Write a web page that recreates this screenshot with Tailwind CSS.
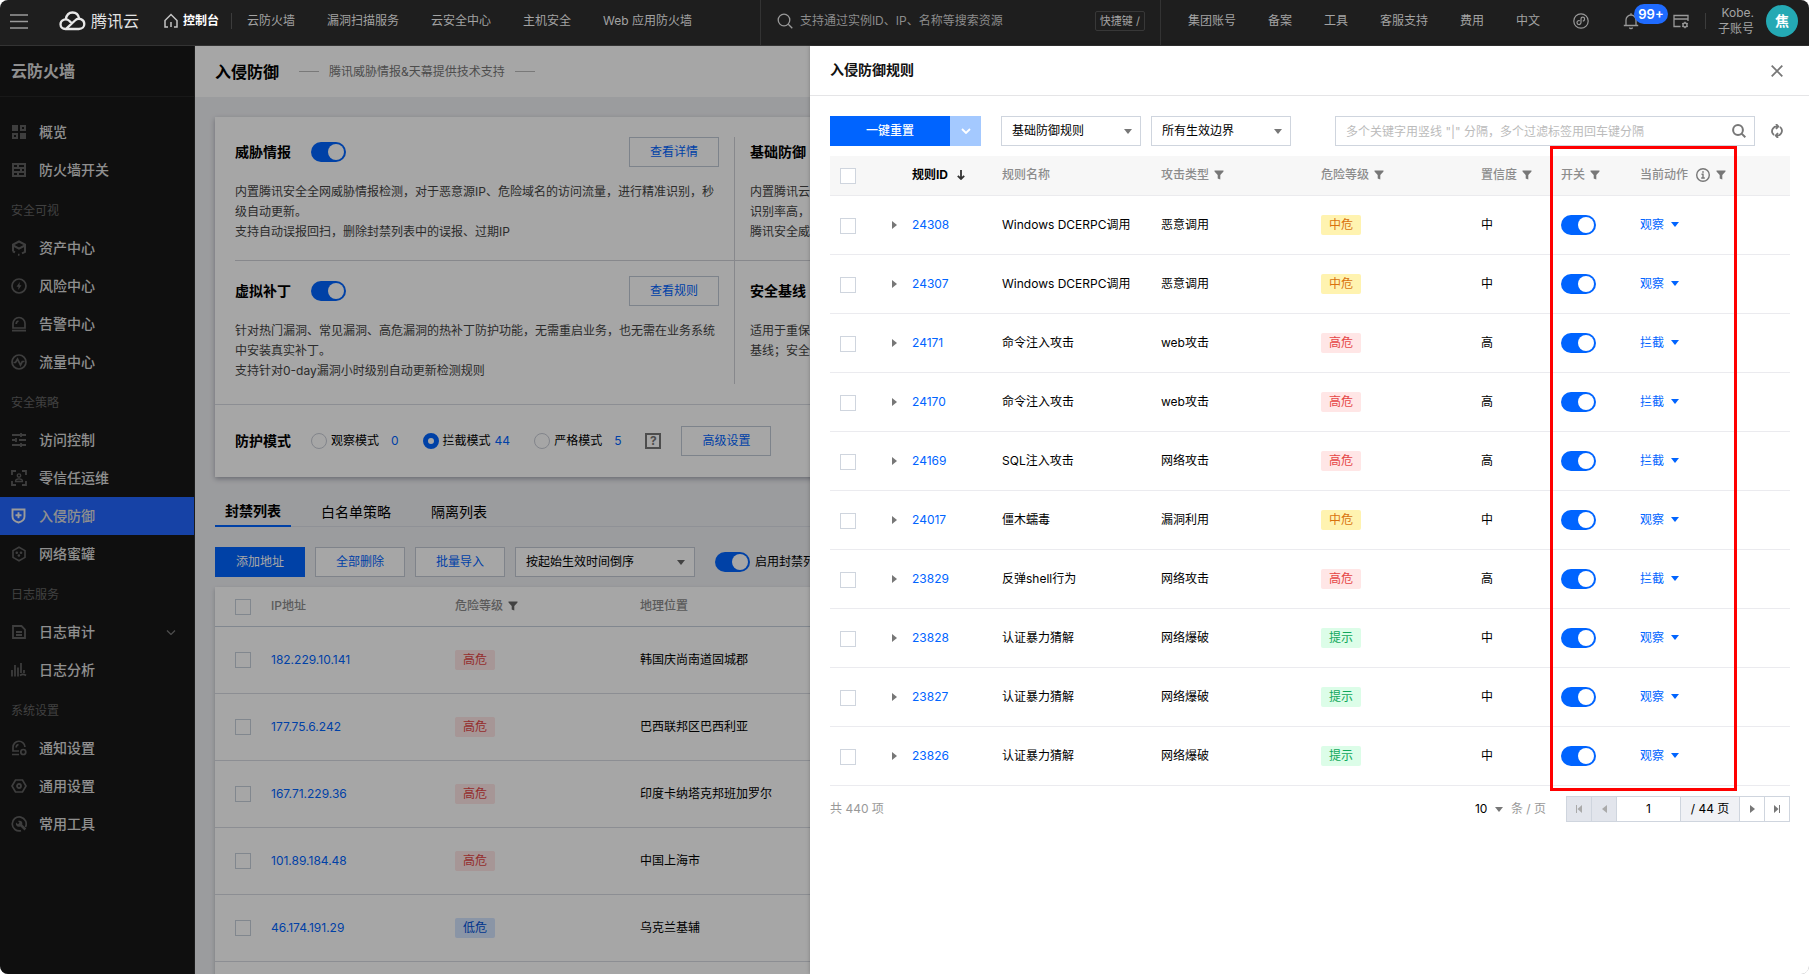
<!DOCTYPE html>
<html lang="zh-CN">
<head>
<meta charset="utf-8">
<meta name="viewport" content="width=device-width, initial-scale=1">
<title>云防火墙 - 入侵防御</title>
<script src="https://cdn.jsdelivr.net/npm/@tailwindcss/browser@4"></script>
</head>
<body class="bg-white font-['Inter','Noto_Sans_CJK_SC',sans-serif] text-xs leading-5 text-black">

<!-- Shared icon sprite -->
<svg class="hidden" aria-hidden="true">
  <symbol id="i-filter" viewBox="0 0 10 10"><path d="M.5.5h9v1L6.300 5v4.500L3.700 8.500V5L.5 1.500z" fill="currentColor"/></symbol>
  <symbol id="i-down" viewBox="0 0 8 5"><path d="M0 0h8L4 5z" fill="currentColor"/></symbol>
  <symbol id="i-right" viewBox="0 0 5 8"><path d="M0 0v8l5-4z" fill="currentColor"/></symbol>
  <symbol id="i-grid" viewBox="0 0 16 16"><path d="M1 1h6v6H1zM9 9h6v6H9z" fill="currentColor"/><path d="M10 2h4v4h-4zM2 10h4v4H2z" fill="none" stroke="currentColor" stroke-width="2"/></symbol>
  <symbol id="i-wall" viewBox="0 0 16 16"><path d="M2 2h12v12H2zM2 6h12M2 10h12M7 2v4M10 6v4M7 10v4" fill="none" stroke="currentColor" stroke-width="2"/></symbol>
  <symbol id="i-box" viewBox="0 0 16 16"><path d="M2 11.500V4.700L8 1.500l6 3.200v7.200l-3 1.500M2.200 5.500 8 8.600l5.800-3.100M2 11.500l2 .8M7 14.700l1.500.1" fill="none" stroke="currentColor" stroke-width="2"/></symbol>
  <symbol id="i-bolt" viewBox="0 0 16 16"><circle cx="8" cy="8" r="7" fill="none" stroke="currentColor" stroke-width="1.700"/><path d="M8.800 4 5.500 8.800h2L7.200 12l3.300-4.800h-2z" fill="currentColor"/></symbol>
  <symbol id="i-alarm" viewBox="0 0 16 16"><path d="M2 12V7.500a6 6 0 0 1 12 0V12zM1 14.700h14M5.200 8a3 3 0 0 1 2.300-3" fill="none" stroke="currentColor" stroke-width="1.700"/></symbol>
  <symbol id="i-pulse" viewBox="0 0 16 16"><circle cx="8" cy="8" r="7" fill="none" stroke="currentColor" stroke-width="1.700"/><path d="M2.500 8.500h2L6.500 5l3 6 1.800-3.500h2.200" fill="none" stroke="currentColor" stroke-width="1.700"/></symbol>
  <symbol id="i-sliders" viewBox="0 0 16 16"><path d="M1 3h8M10 1v4M10 3h5M1 8h3M5 6v4M8 8h7M1 13h8M10 11v4M10 13h5" fill="none" stroke="currentColor" stroke-width="1.800"/></symbol>
  <symbol id="i-scan" viewBox="0 0 16 16"><path d="M1 5V1h4M11 1h4v4M15 11v4h-4M5 15H1v-4" fill="none" stroke="currentColor" stroke-width="1.800"/><circle cx="8" cy="5.500" r="1.700" fill="none" stroke="currentColor" stroke-width="1.300"/><path d="M4.500 11.500c0-3.500 7-3.500 7 0z" fill="none" stroke="currentColor" stroke-width="1.300"/></symbol>
  <symbol id="i-shield" viewBox="0 0 16 16"><path d="M1.500 1.500h12v7c0 3.500-2.800 5.200-6 6-3.200-.8-6-2.500-6-6zM7.500 4.300v6M4.500 7.300h6" fill="none" stroke="currentColor" stroke-width="1.900"/></symbol>
  <symbol id="i-honey" viewBox="0 0 16 16"><path d="m8 1.200 6 3.400v6.800l-6 3.400-6-3.400V4.600z" fill="none" stroke="currentColor" stroke-width="1.600"/><circle cx="5.800" cy="6.800" r="1.300" fill="currentColor"/><circle cx="10" cy="6.800" r="1.300" fill="currentColor"/><circle cx="7.900" cy="9.500" r="1.300" fill="currentColor"/></symbol>
  <symbol id="i-doc" viewBox="0 0 16 16"><path d="M2 2h8.500L14 5.500V14H2zM5 8h6M5 11h6" fill="none" stroke="currentColor" stroke-width="1.800"/></symbol>
  <symbol id="i-bars" viewBox="0 0 16 16"><path d="M1 8v6.500M4 3v11.500M7 5.500v9M10 1v10M13 8v3M9 13.500c2-1.500 4-1.500 6 0" fill="none" stroke="currentColor" stroke-width="1.700"/></symbol>
  <symbol id="i-alarmset" viewBox="0 0 16 16"><path d="M8 11H2V7.500a6 6 0 0 1 12-.5M1 14.500h7M5.200 7.500a3 3 0 0 1 2.300-3" fill="none" stroke="currentColor" stroke-width="1.700"/><circle cx="12.300" cy="12" r="2.500" fill="none" stroke="currentColor" stroke-width="1.700"/></symbol>
  <symbol id="i-hexset" viewBox="0 0 16 16"><path d="M4.500 2h7L15 8l-3.500 6h-7L1 8z" fill="none" stroke="currentColor" stroke-width="1.700"/><circle cx="8" cy="8" r="2" fill="none" stroke="currentColor" stroke-width="1.800"/></symbol>
  <symbol id="i-tool" viewBox="0 0 16 16"><path d="M14.500 11A7 7 0 1 0 10 14.700" fill="none" stroke="currentColor" stroke-width="1.700"/><path d="M5 6.500 7 8.300 8.500 6.800 7 5c3-1 5 1 4.200 3.500l4 4-1.700 1.900-4-4C6.500 11.500 4.200 9.500 5 6.500z" fill="currentColor"/></symbol>
</svg>

<div class="flex h-screen flex-col overflow-hidden rounded-lg">

  <!-- Global navigation -->
  <header class="flex h-[46px] shrink-0 items-center border-b border-[#333] bg-[#1e1e1e] pb-1 text-[#a3a3a3]">
    <button type="button" aria-label="菜单" class="ml-2.5 flex h-5 w-5 items-center">
      <svg class="h-4 w-[18px]" viewBox="0 0 18 16" fill="none" stroke="#9a9a9a" stroke-width="1.500"><path d="M0 2h18M0 8.500h18M0 15h18"/></svg>
    </button>
    <a href="#" class="ml-[29px] flex items-center gap-[5px] text-base text-[#e2e2e2]">
      <svg class="h-5 w-[27px]" viewBox="0 0 27 20" fill="none" stroke="#e8e8e8" stroke-width="2.300"><path d="M6.800 8.300C7.500 4 10.200 1.500 13.500 1.500s6 2.300 6.700 6.200"/><path d="M13 12.600 10.500 10C7 6.700 1.500 9 1.500 13.300c0 2.700 2 4.700 5 4.700h13.300c3.500 0 5.500-2.300 5.500-5 0-5-6-6.800-9.300-3.500L7.300 17.700"/></svg>
      腾讯云
    </a>
    <nav class="flex items-center">
      <a href="#" class="ml-6 flex items-center gap-1 font-semibold text-white">
        <svg class="h-4 w-4" viewBox="0 0 16 16" fill="none" stroke="#c4c4c4" stroke-width="1.500"><path d="M5 14H2V7.500L8 1.500l6 6V14h-3M8 14V9"/></svg>
        控制台
      </a>
      <span class="ml-3 h-4 w-px bg-[#3c3c3c]"></span>
      <a href="#" class="ml-[15px]">云防火墙</a>
      <a href="#" class="ml-8">漏洞扫描服务</a>
      <a href="#" class="ml-8">云安全中心</a>
      <a href="#" class="ml-8">主机安全</a>
      <a href="#" class="ml-8">Web 应用防火墙</a>
    </nav>
    <label class="-mb-1 ml-auto flex h-[45px] w-[401px] items-center border-x border-[#333] pb-1 pr-[15px] pl-4">
      <svg class="h-4 w-4 shrink-0" viewBox="0 0 16 16" fill="none" stroke="#999" stroke-width="1.300"><circle cx="7" cy="7" r="5.800"/><path d="m11.300 11.300 4 4"/></svg>
      <input type="text" aria-label="搜索" placeholder="支持通过实例ID、IP、名称等搜索资源" class="ml-[7px] min-w-0 flex-1 bg-transparent outline-none placeholder:text-[#8c8c8c]">
      <kbd class="flex h-5 w-[50px] items-center justify-center rounded-xs border border-[#383838] font-['Inter','Noto_Sans_CJK_SC',sans-serif] text-[11px]">快捷键 /</kbd>
    </label>
    <nav class="ml-[27px] flex items-center gap-8">
      <a href="#">集团账号</a>
      <a href="#">备案</a>
      <a href="#">工具</a>
      <a href="#">客服支持</a>
      <a href="#">费用</a>
      <a href="#">中文</a>
    </nav>
    <button type="button" aria-label="活动" class="ml-[33px]">
      <svg class="h-4 w-4" viewBox="0 0 16 16" fill="none" stroke="#999" stroke-width="1.200"><circle cx="8" cy="8" r="7.200"/><path d="M6.800 7.700a2 2 0 1 0 1.200 1.900V6a1.800 1.800 0 0 1 3.600 0c0 1.300-.7 2-1.800 2.200"/></svg>
    </button>
    <button type="button" aria-label="消息" class="relative ml-[34px]">
      <svg class="h-[18px] w-4" viewBox="0 0 16 18" fill="none" stroke="#999" stroke-width="1.300"><path d="M3 13V8a5 5 0 0 1 10 0v5M.8 13.500h14.400M8 3V1.200M6.500 15.500c.3 1.500 2.700 1.500 3 0"/></svg>
      <span class="absolute -top-2 left-[11px] flex h-5 w-[34px] items-center justify-center rounded-full bg-[#1f6bff] text-[13px] font-semibold text-white">99+</span>
    </button>
    <button type="button" aria-label="自定义" class="ml-[34px]">
      <svg class="h-4 w-4" viewBox="0 0 16 16" fill="none" stroke="#999" stroke-width="1.300"><path d="M7.500 13.500H1v-11h14V8M1 6h14"/><circle cx="12" cy="12" r="2"/><path d="M12 8.800V10M12 14v1.200M9.200 10.400l1.100.6M13.700 13l1.100.6M9.200 13.600l1.100-.6M13.700 11l1.100-.6"/></svg>
    </button>
    <span class="ml-4 h-4 w-px bg-[#3c3c3c]"></span>
    <a href="#" class="ml-3 text-right leading-4">Kobe.<br>子账号</a>
    <a href="#" class="mr-[11px] ml-3 flex h-8 w-8 items-center justify-center rounded-full bg-[#24a9b4] text-sm font-bold text-white">焦</a>
  </header>

  <div class="relative flex min-h-0 flex-1">

    <!-- Product menu -->
    <aside class="w-[195px] shrink-0 border-r border-[#2c2c2c] bg-[#181818]">
      <h2 class="flex h-[51px] items-center border-b border-[#262626] pl-[11px] text-base font-bold text-[#dcdcdc]">云防火墙</h2>
      <nav id="menu" class="pt-4 text-sm font-medium text-[#dcdcdc]"></nav>
    </aside>

    <!-- Page -->
    <main class="min-w-0 flex-1 overflow-hidden bg-[#eff0f3]">
      <div class="flex h-[51px] items-center bg-white pl-5">
        <h1 class="text-base font-bold">入侵防御</h1>
        <span class="ml-5 h-px w-5 bg-[#bbb]"></span>
        <span class="mx-2.5 text-[#777]">腾讯威胁情报&amp;天幕提供技术支持</span>
        <span class="h-px w-5 bg-[#bbb]"></span>
      </div>

      <section class="mx-5 mt-5 bg-white shadow-[0_2px_5px_rgba(54,58,80,0.4)]">
        <div class="grid grid-cols-3 py-5 pr-[54px] pl-5">
          <div class="flex flex-col border-r border-[#cfd2d8]" id="features-left"></div>
          <div class="flex flex-col" id="features-mid"></div>
        </div>
        <div class="flex h-[73px] items-center border-t border-[#d8dae2] px-5">
          <h3 class="text-sm font-bold">防护模式</h3>
          <label class="ml-5 flex items-center gap-1"><input type="radio" name="mode" class="h-4 w-4 appearance-none rounded-full border border-[#c8ccd6]">观察模式<span class="ml-2 text-[#0064ff]">0</span></label>
          <label class="ml-6 flex items-center gap-1"><input type="radio" name="mode" checked class="h-4 w-4 appearance-none rounded-full border-[#c8ccd6] checked:border-[5px] checked:border-[#0064ff]">拦截模式<span class="text-[#0064ff]">44</span></label>
          <label class="ml-6 flex items-center gap-1"><input type="radio" name="mode" class="h-4 w-4 appearance-none rounded-full border border-[#c8ccd6]">严格模式<span class="ml-2 text-[#0064ff]">5</span></label>
          <span class="ml-6 flex h-4 w-4 items-center justify-center border-2 border-[#777] font-bold text-[#777]">?</span>
          <button type="button" class="ml-5 h-[30px] w-[90px] border border-[#c0c9d6] text-[#0064ff]">高级设置</button>
        </div>
      </section>

      <div role="tablist" class="mx-5 mt-5 flex h-[30px] gap-5 border-b border-[#dcdfe6] text-sm">
        <button role="tab" aria-selected="true" type="button" class="h-[30px] border-b-2 border-[#0064ff] px-2.5 font-bold">封禁列表</button>
        <button role="tab" type="button" class="h-[30px] px-2.5">白名单策略</button>
        <button role="tab" type="button" class="h-[30px] px-2.5">隔离列表</button>
      </div>

      <div class="mx-5 mt-5 flex items-center gap-2.5">
        <button type="button" class="h-[30px] w-[90px] bg-[#0064ff] text-white">添加地址</button>
        <button type="button" class="h-[30px] w-[90px] border border-[#c4c9d4] bg-white text-[#0064ff]">全部删除</button>
        <button type="button" class="h-[30px] w-[90px] border border-[#c4c9d4] bg-white text-[#0064ff]">批量导入</button>
        <span class="relative flex">
          <select aria-label="排序" class="h-[30px] w-[180px] appearance-none border border-[#c4c9d4] bg-white px-2.5"><option>按起始生效时间倒序</option></select>
          <svg class="pointer-events-none absolute top-[13px] right-2.5 h-[5px] w-2 text-[#666]"><use href="#i-down"/></svg>
        </span>
        <label class="ml-2.5 flex items-center gap-[5px] whitespace-nowrap"><input type="checkbox" role="switch" checked class="h-5 w-[35px] appearance-none rounded-full bg-[#0064ff] p-0.5 before:ml-auto before:block before:size-4 before:rounded-full before:bg-white before:content-['']">启用封禁列表</label>
      </div>

      <div class="mx-5 mt-2.5 bg-white shadow-[0_2px_4px_rgba(54,58,80,0.3)]">
        <table class="w-full table-fixed border-collapse text-left">
          <colgroup><col class="w-[46px]"><col class="w-[184px]"><col class="w-[185px]"><col></colgroup>
          <thead>
            <tr class="h-[39px] border-b border-[#c6d0dc] text-[#8c8c8c]">
              <th class="pt-0.5 pl-5"><input type="checkbox" aria-label="全选" class="block h-4 w-4 appearance-none border border-[#c6cfda]"></th>
              <th class="px-2.5 font-medium">IP地址</th>
              <th class="px-2.5 font-medium"><span class="flex items-center gap-[5px]">危险等级<svg class="size-2.5 text-[#666]"><use href="#i-filter"/></svg></span></th>
              <th class="px-2.5 font-medium">地理位置</th>
            </tr>
          </thead>
          <tbody id="blocked"></tbody>
        </table>
      </div>
    </main>

    <!-- Drawer mask -->
    <div class="absolute inset-0 bg-black/35"></div>

    <!-- Rules drawer -->
    <section role="dialog" aria-label="入侵防御规则" class="absolute inset-y-0 right-0 w-[999px] bg-white shadow-[0_0_4px_rgba(0,0,0,0.25)]">
      <div class="flex h-[50px] items-center justify-between border-b border-[#e5e5e7] pr-[26px] pl-5">
        <h2 class="pb-0.5 text-sm font-bold text-[#111]">入侵防御规则</h2>
        <button type="button" aria-label="关闭"><svg class="size-3" viewBox="0 0 12 12" fill="none" stroke="#777" stroke-width="1.800"><path d="m.7.7 10.600 10.600M11.300.7.7 11.300"/></svg></button>
      </div>

      <div class="flex items-center pt-5 pr-5 pl-5">
        <button type="button" class="h-[30px] w-[120px] bg-[#0064ff] font-medium text-white">一键重置</button>
        <button type="button" aria-label="更多重置选项" class="flex h-[30px] w-[31px] items-center justify-center bg-[#a4c9ff]"><svg class="h-1.5 w-2.5" viewBox="0 0 10 6" fill="none" stroke="#fff" stroke-width="1.800"><path d="m1 1 4 4 4-4"/></svg></button>
        <span class="relative ml-5 flex">
          <select aria-label="规则类型" class="h-[30px] w-[140px] appearance-none border border-[#cfd5de] bg-white px-2.5"><option>基础防御规则</option></select>
          <svg class="pointer-events-none absolute top-[13px] right-[9px] h-[5px] w-2 text-[#777]"><use href="#i-down"/></svg>
        </span>
        <span class="relative ml-2.5 flex">
          <select aria-label="生效边界" class="h-[30px] w-[140px] appearance-none border border-[#cfd5de] bg-white px-2.5"><option>所有生效边界</option></select>
          <svg class="pointer-events-none absolute top-[13px] right-[9px] h-[5px] w-2 text-[#777]"><use href="#i-down"/></svg>
        </span>
        <label class="ml-auto flex h-[30px] w-[420px] items-center border border-[#cfd5de] pr-2 pl-2.5">
          <input type="text" aria-label="搜索规则" placeholder="多个关键字用竖线 &quot;|&quot; 分隔，多个过滤标签用回车键分隔" class="min-w-0 flex-1 pt-0.5 outline-none placeholder:text-[#bbb]">
          <svg class="size-3.5" viewBox="0 0 14 14" fill="none" stroke="#777" stroke-width="2"><circle cx="6" cy="6" r="4.900"/><path d="m9.600 9.600 3.700 3.700"/></svg>
        </label>
        <button type="button" aria-label="刷新" class="mr-1.5 ml-4"><svg class="h-3.5 w-3" viewBox="0 0 12 14" fill="none" stroke="#777" stroke-width="1.800"><path d="M6.500 2.500C2.500 2 0 6 1.500 9.200c.4.8.9 1.400 1.600 1.800M5.500 11.500c4 .5 6.500-3.500 5-6.700-.4-.8-.9-1.400-1.600-1.800M5 0l2.300 2.500L5 5M7 9l-2.300 2.500L7 14"/></svg></button>
      </div>

      <table class="mt-2.5 ml-5 w-[960px] table-fixed border-collapse text-left">
        <colgroup><col class="w-[50px]"><col class="w-[22px]"><col class="w-[90px]"><col class="w-[159px]"><col class="w-[160px]"><col class="w-[160px]"><col class="w-[80px]"><col class="w-[79px]"><col></colgroup>
        <thead>
          <tr class="h-[39px] border-b border-[#ebebee] bg-[#f7f7f7] text-[#8c8c8c]">
            <th class="pt-0.5 pl-2.5"><input type="checkbox" aria-label="全选规则" class="block h-4 w-4 appearance-none border border-[#cfd5de] bg-white"></th>
            <th></th>
            <th aria-sort="descending" class="px-2.5 font-bold text-black"><span class="flex items-center gap-[9px]">规则ID<svg class="h-2.5 w-2" viewBox="0 0 8 10" fill="none" stroke="#333" stroke-width="1.800"><path d="M4 0v8.500M.8 5.800 4 9l3.200-3.200"/></svg></span></th>
            <th class="px-2.5 font-medium">规则名称</th>
            <th class="px-2.5 font-medium"><span class="flex items-center gap-[5px]">攻击类型<svg class="size-2.5 text-[#777]"><use href="#i-filter"/></svg></span></th>
            <th class="px-2.5 font-medium"><span class="flex items-center gap-[5px]">危险等级<svg class="size-2.5 text-[#777]"><use href="#i-filter"/></svg></span></th>
            <th class="px-2.5 font-medium"><span class="flex items-center gap-[5px]">置信度<svg class="size-2.5 text-[#777]"><use href="#i-filter"/></svg></span></th>
            <th class="px-2.5 font-medium"><span class="flex items-center gap-[5px]">开关<svg class="size-2.5 text-[#777]"><use href="#i-filter"/></svg></span></th>
            <th class="px-2.5 font-medium"><span class="flex items-center gap-1.5">当前动作<svg class="ml-0.5 size-3.5" viewBox="0 0 14 14" fill="none" stroke="#777" stroke-width="1.400"><circle cx="7" cy="7" r="6.300"/><path d="M5.500 6.300H7V10M5.200 10h3.600M6.200 4h1.600"/></svg><svg class="size-2.5 text-[#777]"><use href="#i-filter"/></svg></span></th>
          </tr>
        </thead>
        <tbody id="rules"></tbody>
      </table>

      <div class="mt-2.5 flex h-[26px] items-center pr-[19px] pl-5 text-[#999]">
        <span>共 440 项</span>
        <label class="ml-auto flex items-center">
          <span class="relative flex"><select aria-label="每页条数" class="w-7 appearance-none bg-transparent text-black"><option>10</option></select><svg class="pointer-events-none absolute top-2 right-0 h-[5px] w-2 text-[#777]"><use href="#i-down"/></svg></span>
          <span class="ml-2">条 / 页</span>
        </label>
        <div class="ml-5 flex h-[26px] divide-x divide-[#cfd5de] border border-[#cfd5de] text-black">
          <button type="button" aria-label="首页" disabled class="flex w-[25px] items-center justify-center bg-[#e2e5ec] text-[#aaa]"><svg class="h-2 w-1.5" viewBox="0 0 6 8" fill="currentColor"><path d="M0 0h1v8H0zM6 0v8L1.500 4z"/></svg></button>
          <button type="button" aria-label="上一页" disabled class="flex w-[25px] items-center justify-center bg-[#e2e5ec] text-[#aaa]"><svg class="h-2 w-[5px]" viewBox="0 0 5 8" fill="currentColor"><path d="M5 0v8L0 4z"/></svg></button>
          <input type="text" aria-label="页码" value="1" class="w-16 text-center outline-none">
          <span class="flex w-[59px] items-center justify-center bg-[#f0f1f5]">/ 44 页</span>
          <button type="button" aria-label="下一页" class="flex w-[25px] items-center justify-center text-[#777]"><svg class="h-2 w-[5px]"><use href="#i-right"/></svg></button>
          <button type="button" aria-label="末页" class="flex w-6 items-center justify-center text-[#777]"><svg class="h-2 w-1.5" viewBox="0 0 6 8" fill="currentColor"><path d="M5 0h1v8H5zM0 0v8l4.500-4z"/></svg></button>
        </div>
      </div>

      <!-- Highlight around the switch and action columns -->
      <div class="pointer-events-none absolute top-[100px] right-[72px] h-[645px] w-[187px] border-3 border-[#ff0000]"></div>
    </section>
  </div>
</div>

<script>
const toggle = label => `<input type="checkbox" role="switch" checked aria-label="${label}" class="block h-5 w-[35px] appearance-none rounded-full bg-[#0064ff] p-0.5 before:ml-auto before:block before:size-4 before:rounded-full before:bg-white before:content-['']">`;

const tagClass = {
  '高危': 'bg-[#ffe6e6] text-[#e54545]',
  '中危': 'bg-[#fff3b0] text-[#d9720d]',
  '提示': 'bg-[#dcfde8] text-[#10a75a]',
  '低危': 'bg-[#d5e5ff] text-[#0052d9]'
};
const tag = level => `<span class="flex h-5 w-10 items-center justify-center rounded-xs ${tagClass[level]}">${level}</span>`;

const menu = [
  ['grid', '概览'], ['wall', '防火墙开关'],
  '安全可视', ['box', '资产中心'], ['bolt', '风险中心'], ['alarm', '告警中心'], ['pulse', '流量中心'],
  '安全策略', ['sliders', '访问控制'], ['scan', '零信任运维'], ['shield', '入侵防御'], ['honey', '网络蜜罐'],
  '日志服务', ['doc', '日志审计'], ['bars', '日志分析'],
  '系统设置', ['alarmset', '通知设置'], ['hexset', '通用设置'], ['tool', '常用工具']
];
document.getElementById('menu').innerHTML = menu.map(m => {
  if (typeof m === 'string') return `<div class="flex h-10 items-center pt-1 pl-[11px] text-xs font-normal text-[#646464]">${m}</div>`;
  const active = m[1] === '入侵防御';
  const arrow = m[1] === '日志审计' ? '<svg class="mr-[18px] ml-auto h-[5px] w-2.5" viewBox="0 0 10 5" fill="none" stroke="#777" stroke-width="1.200"><path d="m1 .5 4 4 4-4"/></svg>' : '';
  return `<a href="#" class="flex h-[38px] items-center pl-[11px] ${active ? 'bg-[#2266ff]' : ''}"><svg class="mr-3 size-4 ${active ? 'text-[#eee]' : 'text-[#606060]'}"><use href="#i-${m[0]}"/></svg>${m[1]}${arrow}</a>`;
}).join('');

const feature = (title, button, lines, bottom) => `
  <div class="${bottom ? 'h-[108px] pt-[15px]' : 'h-[124px] border-b border-[#cfd2d8]'} ${button ? 'pr-[15px]' : 'pl-[15px]'}">
    <div class="flex h-[30px] items-center gap-5">
      <h3 class="text-sm font-bold">${title}</h3>${toggle(title)}
      ${button ? `<button type="button" class="ml-auto h-[30px] w-[90px] border border-[#c0c9d6] text-[#0064ff]">${button}</button>` : ''}
    </div>
    <p class="mt-[15px] text-[#444]">${lines.join('<br>')}</p>
  </div>`;
document.getElementById('features-left').innerHTML =
  feature('威胁情报', '查看详情', ['内置腾讯安全全网威胁情报检测，对于恶意源IP、危险域名的访问流量，进行精准识别，秒级自动更新。', '支持自动误报回扫，删除封禁列表中的误报、过期IP'], false) +
  feature('虚拟补丁', '查看规则', ['针对热门漏洞、常见漏洞、高危漏洞的热补丁防护功能，无需重启业务，也无需在业务系统中安装真实补丁。', '支持针对0-day漏洞小时级别自动更新检测规则'], true) + '<div class="h-[15px]"></div>';
document.getElementById('features-mid').innerHTML =
  feature('基础防御', '', ['内置腾讯云', '识别率高，', '腾讯安全威'], false) +
  feature('安全基线', '', ['适用于重保', '基线；安全'], true);

document.getElementById('blocked').innerHTML = [
  ['182.229.10.141', '高危', '韩国庆尚南道固城郡'],
  ['177.75.6.242', '高危', '巴西联邦区巴西利亚'],
  ['167.71.229.36', '高危', '印度卡纳塔克邦班加罗尔'],
  ['101.89.184.48', '高危', '中国上海市'],
  ['46.174.191.29', '低危', '乌克兰基辅'],
  ['', '', '']
].map(r => `<tr class="h-[67px] border-b border-[#d8dbe2]">
  <td class="pl-5">${r[0] ? `<input type="checkbox" aria-label="选择 ${r[0]}" class="block h-4 w-4 appearance-none border border-[#c6cfda]">` : ''}</td>
  <td class="px-2.5"><a href="#" class="text-[#0064ff]">${r[0]}</a></td>
  <td class="px-2.5">${r[1] ? tag(r[1]) : ''}</td>
  <td class="px-2.5">${r[2]}</td></tr>`).join('');

document.getElementById('rules').innerHTML = [
  ['24308', 'Windows DCERPC调用', '恶意调用', '中危', '中', '观察'],
  ['24307', 'Windows DCERPC调用', '恶意调用', '中危', '中', '观察'],
  ['24171', '命令注入攻击', 'web攻击', '高危', '高', '拦截'],
  ['24170', '命令注入攻击', 'web攻击', '高危', '高', '拦截'],
  ['24169', 'SQL注入攻击', '网络攻击', '高危', '高', '拦截'],
  ['24017', '僵木蠕毒', '漏洞利用', '中危', '中', '观察'],
  ['23829', '反弹shell行为', '网络攻击', '高危', '高', '拦截'],
  ['23828', '认证暴力猜解', '网络爆破', '提示', '中', '观察'],
  ['23827', '认证暴力猜解', '网络爆破', '提示', '中', '观察'],
  ['23826', '认证暴力猜解', '网络爆破', '提示', '中', '观察']
].map(r => `<tr class="h-[59px] border-b border-[#ebebef]">
  <td class="pt-0.5 pl-2.5"><input type="checkbox" aria-label="选择规则 ${r[0]}" class="block h-4 w-4 appearance-none border border-[#cfd5de]"></td>
  <td class="pl-3"><button type="button" aria-label="展开 ${r[0]}" class="flex items-center text-[#777]"><svg class="h-2 w-[5px]"><use href="#i-right"/></svg></button></td>
  <td class="px-2.5"><a href="#" class="text-[#0064ff]">${r[0]}</a></td>
  <td class="px-2.5">${r[1]}</td>
  <td class="px-2.5">${r[2]}</td>
  <td class="px-2.5">${tag(r[3])}</td>
  <td class="px-2.5">${r[4]}</td>
  <td class="px-2.5">${toggle('规则 ' + r[0])}</td>
  <td class="px-2.5"><button type="button" class="flex items-center gap-[7px] text-[#0064ff]">${r[5]}<svg class="h-[5px] w-2"><use href="#i-down"/></svg></button></td></tr>`).join('');
</script>
</body>
</html>
